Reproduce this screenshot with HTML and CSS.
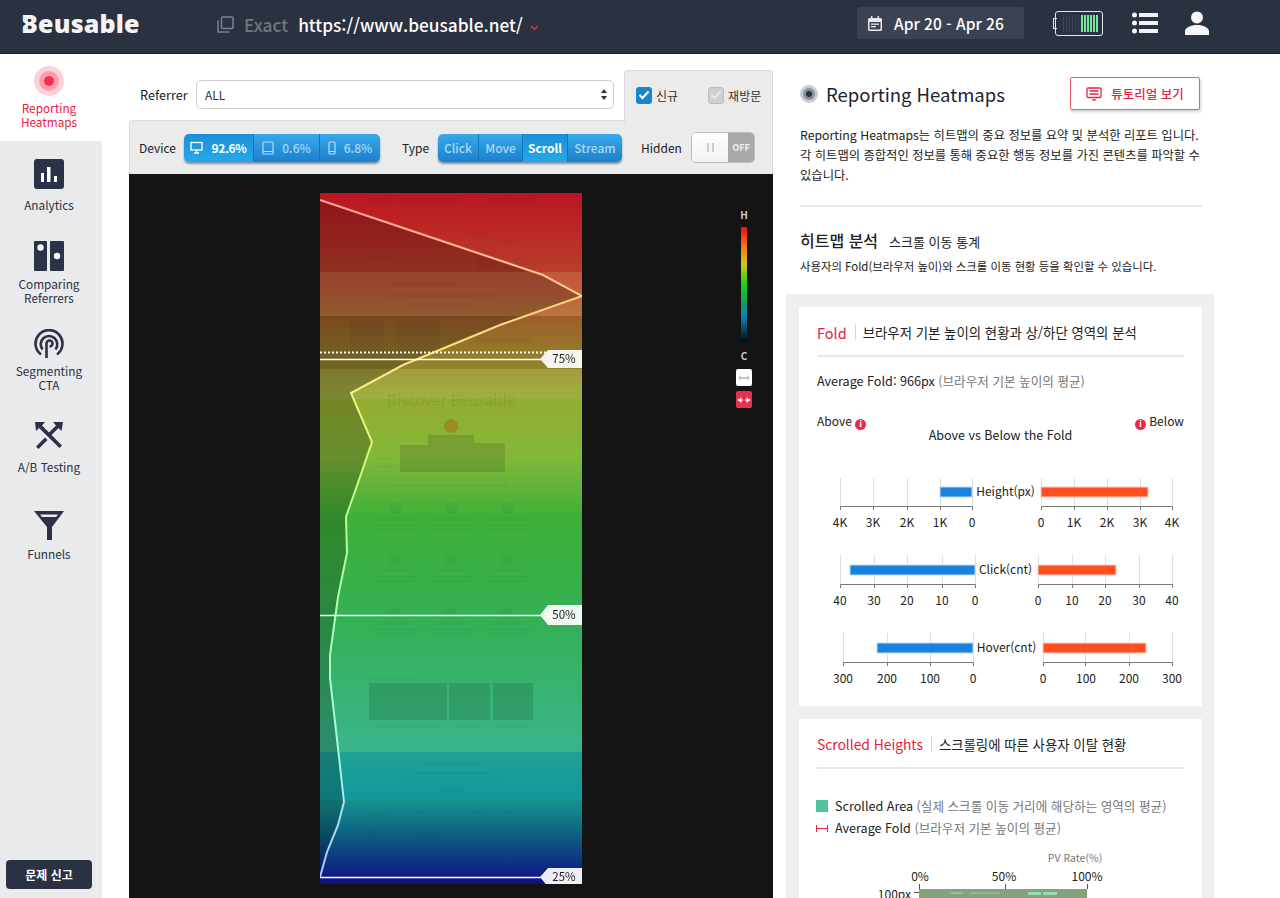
FILE: index.html
```html
<!DOCTYPE html>
<html lang="ko">
<head>
  <meta charset="UTF-8">
  <title>Beusable - Reporting Heatmaps</title>
  <link rel="stylesheet" href="styles.css">
</head>
<body>

  <header class="topbar">
    <div class="logo">Beusable</div>
    <div class="url-box">
      <svg class="copy-icon" width="17" height="17" viewBox="0 0 17 17" fill="none" stroke="#7d828d" stroke-width="1.5">
        <rect x="4.5" y="1" width="11.5" height="11.5" rx="1"/>
        <path d="M1 4.5V16H12.5"/>
      </svg>
      <span class="exact">Exact</span>
      <span class="url">https://www.beusable.net/</span>
      <svg class="chevron" width="9" height="6" viewBox="0 0 9 6" fill="none" stroke="#d8334a" stroke-width="1.5"><path d="M1 1l3.5 3.5L8 1"/></svg>
    </div>
    <div class="date-box">
      <svg width="14" height="15" viewBox="0 0 14 15" fill="#e8e9ec">
        <path d="M3 0h1.5v2h5V0H11v2h1.5A1.5 1.5 0 0 1 14 3.500V13.500A1.500 1.500 0 0 1 12.500 15H1.500A1.500 1.500 0 0 1 0 13.500V3.500A1.500 1.500 0 0 1 1.500 2H3zM1.500 6v7.500h11V6z"/>
        <rect x="3" y="7.500" width="8" height="1.300"/>
        <rect x="3" y="10" width="5" height="1.300"/>
      </svg>
      <span>Apr 20 - Apr 26</span>
    </div>
    <div class="battery">
      <div class="battery-off"></div>
      <div class="battery-on"></div>
    </div>
    <svg class="list-icon" width="26" height="22" viewBox="0 0 26 22" fill="#f2f3f5">
      <circle cx="2.500" cy="3" r="2.500"/><rect x="7" y="1" width="19" height="4"/>
      <circle cx="2.500" cy="11" r="2.500"/><rect x="7" y="9" width="19" height="4"/>
      <circle cx="2.500" cy="19" r="2.500"/><rect x="7" y="17" width="19" height="4"/>
    </svg>
    <svg class="user-icon" width="24" height="24" viewBox="0 0 24 24" fill="#f7f7f8">
      <circle cx="12" cy="6.500" r="6"/>
      <path d="M0 24v-3.500c0-4 6-6.500 12-6.500s12 2.500 12 6.500V24z"/>
    </svg>
  </header>

  <div class="layout">

    <nav class="sidebar">
      <a class="nav-item active">
        <svg width="30" height="30" viewBox="0 0 30 30">
          <circle cx="15" cy="15" r="15" fill="#fcd0d6"/>
          <circle cx="15" cy="15" r="10" fill="#fb9eab"/>
          <circle cx="15" cy="15" r="5" fill="#f5304f"/>
        </svg>
        <span>Reporting<br>Heatmaps</span>
      </a>
      <div class="nav-rest">
        <a class="nav-item analytics">
          <svg width="30" height="30" viewBox="0 0 30 30">
            <rect width="30" height="30" rx="3" fill="#2a3247"/>
            <rect x="7" y="14" width="3" height="9" fill="#fff"/>
            <rect x="13" y="8" width="3.500" height="15" fill="#fff"/>
            <rect x="20" y="17" width="3" height="6" fill="#fff"/>
          </svg>
          <span>Analytics</span>
        </a>
        <a class="nav-item comparing">
          <svg width="30" height="30" viewBox="0 0 30 30" fill="#2a3247">
            <rect width="13" height="30" rx="1"/>
            <rect x="16" width="14" height="30" rx="1"/>
            <circle cx="6.500" cy="6.500" r="3.200" fill="#fff"/>
            <circle cx="23" cy="15" r="3.200" fill="#fff"/>
          </svg>
          <span>Comparing<br>Referrers</span>
        </a>
        <a class="nav-item segmenting">
          <svg width="30" height="30" viewBox="0 0 30 30" fill="none" stroke="#2a3247" stroke-width="2.600">
            <path d="M7 25.500A13.500 13.500 0 1 1 23 25.500"/>
            <path d="M8.500 20.500A8.300 8.300 0 1 1 21.500 20.500"/>
            <path d="M12.500 29V14.500a3 3 0 1 1 3 3"/>
          </svg>
          <span>Segmenting<br>CTA</span>
        </a>
        <a class="nav-item testing">
          <svg width="30" height="30" viewBox="0 0 30 30" fill="#2a3247">
            <path d="M1 1h10L8 4.500l20 20-2.500 2.500L5 7 2 10z"/>
            <path d="M29 1H19l3 3.500-8.500 8.500 2.500 2.500L24.500 7l3 3z"/>
            <path d="M11 16.500L2 25.500 4.500 28l9-9z"/>
          </svg>
          <span>A/B Testing</span>
        </a>
        <a class="nav-item funnels">
          <svg width="30" height="30" viewBox="0 0 30 30">
            <path d="M0 0H30L18 16V29H13V16z" fill="#2a3247"/>
            <path d="M6 3.500H24L22 6H8z" fill="#e9eaec"/>
          </svg>
          <span>Funnels</span>
        </a>
        <button class="report-btn">문제 신고</button>
      </div>
    </nav>

    <main class="center">
      <div class="filter-row">
        <label class="filter-label">Referrer</label>
        <div class="select-box">
          <span>ALL</span>
          <svg width="6" height="11" viewBox="0 0 6 11" fill="#333"><path d="M3 0l3 4H0zM3 11L0 7h6z"/></svg>
        </div>
        <div class="visit-tab">
          <span class="check on"><svg width="12" height="10" viewBox="0 0 12 10" fill="none" stroke="#fff" stroke-width="2"><path d="M1.500 5l3 3L10.500 1.500"/></svg></span>
          <span class="visit-label">신규</span>
          <span class="check off"><svg width="12" height="10" viewBox="0 0 12 10" fill="none" stroke="#e8e8e8" stroke-width="2"><path d="M1.500 5l3 3L10.500 1.500"/></svg></span>
          <span class="visit-label">재방문</span>
        </div>
      </div>

      <div class="toolbar">
        <span class="tool-label device-label">Device</span>
        <div class="btn-group">
          <button class="seg seg-wide active">
            <svg width="13" height="13" viewBox="0 0 13 13" fill="none" stroke="#fff" stroke-width="1.300"><rect x="1" y="1.500" width="11" height="7.500"/><path d="M6.500 9v2.500M4 12h5"/></svg>
            92.6%
          </button>
          <button class="seg seg-tablet">
            <svg width="12" height="14" viewBox="0 0 12 14" fill="none" stroke="#b5def5" stroke-width="1.200"><rect x="1" y="1" width="10" height="12" rx="1"/><path d="M1 10.500h10"/></svg>
            0.6%
          </button>
          <button class="seg seg-phone">
            <svg width="8" height="14" viewBox="0 0 8 14" fill="none" stroke="#b5def5" stroke-width="1.200"><rect x="1" y="1" width="6" height="12" rx="1"/><path d="M1 10.500h6"/></svg>
            6.8%
          </button>
        </div>
        <span class="tool-label type-label">Type</span>
        <div class="btn-group">
          <button class="seg type-click">Click</button>
          <button class="seg type-move">Move</button>
          <button class="seg type-scroll active">Scroll</button>
          <button class="seg type-stream">Stream</button>
        </div>
        <span class="tool-label hidden-label">Hidden</span>
        <div class="toggle">
          <div class="toggle-knob"><i></i><i></i></div>
          <div class="toggle-off">OFF</div>
        </div>
      </div>

      <div class="heat-panel">
        <svg class="heat-canvas" width="262" height="691" viewBox="320 193 262 691">
          <defs>
            <linearGradient id="heat" x1="0" y1="0" x2="0" y2="1">
              <stop offset="0" stop-color="#bb1521"/>
              <stop offset="0.13" stop-color="#b9442b"/>
              <stop offset="0.2" stop-color="#a8722e"/>
              <stop offset="0.3" stop-color="#94ac2f"/>
              <stop offset="0.38" stop-color="#84b83a"/>
              <stop offset="0.47" stop-color="#3eb038"/>
              <stop offset="0.62" stop-color="#34b055"/>
              <stop offset="0.8" stop-color="#3ab58a"/>
              <stop offset="0.885" stop-color="#169f9f"/>
              <stop offset="0.93" stop-color="#0e6a8f"/>
              <stop offset="1" stop-color="#120f93"/>
            </linearGradient>
            <linearGradient id="curve" x1="0" y1="0" x2="0" y2="1">
              <stop offset="0" stop-color="#ff9c9c"/>
              <stop offset="0.15" stop-color="#ffd088"/>
              <stop offset="0.3" stop-color="#f4f57a"/>
              <stop offset="0.5" stop-color="#b4ff9a"/>
              <stop offset="0.8" stop-color="#a4ffd8"/>
              <stop offset="1" stop-color="#a8c8ff"/>
            </linearGradient>
            <g id="feature">
              <rect x="-6" y="-6" width="12" height="12" rx="2"/>
              <rect x="-15" y="9" width="30" height="2.500"/>
              <rect x="-24" y="16" width="48" height="2"/>
              <rect x="-20" y="20" width="40" height="2"/>
            </g>
          </defs>
          <rect x="320" y="193" width="262" height="691" fill="url(#heat)"/>

          <!-- page shot showing through the heat layer -->
          <rect x="320" y="272" width="262" height="44" fill="#ffe9a0" opacity="0.14"/>
          <rect x="320" y="316" width="262" height="53" fill="#000" opacity="0.08"/>
          <rect x="320" y="369" width="262" height="30" fill="#fff" opacity="0.08"/>
          <rect x="320" y="752" width="262" height="48" fill="#0a8fa0" opacity="0.5"/>
          <rect x="320" y="800" width="262" height="84" fill="#000" opacity="0.1"/>
          <g fill="#000" opacity="0.035">
            <rect x="369" y="198" width="20" height="3"/>
            <rect x="398" y="198" width="60" height="3"/>
            <rect x="488" y="198" width="21" height="5"/>
            <rect x="512" y="198" width="21" height="5"/>
            <rect x="369" y="252" width="22" height="6"/>
            <path d="M466 233l11-4 11 4-11 5zM500 242l9-3 9 3-9 4z"/>
            <path d="M475 270l5-20h14l5 20zM500 270l20-15 10 8-15 7z"/>
            <rect x="390" y="282" width="70" height="4"/>
            <rect x="388" y="293" width="110" height="5"/>
            <rect x="410" y="303" width="60" height="4"/>
            <rect x="476" y="338" width="55" height="6"/>
            <rect x="350" y="320" width="35" height="35"/>
            <rect x="395" y="320" width="45" height="35"/>
            <rect x="378" y="457" width="16" height="3"/>
            <rect x="378" y="465" width="16" height="3"/>
            <rect x="393" y="484" width="115" height="3"/>
            <use href="#feature" x="395" y="508"/>
            <use href="#feature" x="451" y="508"/>
            <use href="#feature" x="507" y="508"/>
            <use href="#feature" x="395" y="560"/>
            <use href="#feature" x="451" y="560"/>
            <use href="#feature" x="507" y="560"/>
            <use href="#feature" x="395" y="613"/>
            <use href="#feature" x="451" y="613"/>
            <use href="#feature" x="507" y="613"/>
            <rect x="369" y="677" width="47" height="3"/>
            <rect x="373" y="725" width="66" height="3"/>
            <rect x="453" y="725" width="30" height="3"/>
            <rect x="497" y="725" width="30" height="3"/>
            <rect x="423" y="761" width="56" height="5"/>
            <rect x="410" y="772" width="82" height="2"/>
            <rect x="402" y="777" width="98" height="2"/>
            <rect x="440" y="786" width="23" height="6"/>
            <rect x="369" y="812" width="16" height="3"/>
            <rect x="415" y="811" width="10" height="2"/>
            <rect x="415" y="818" width="22" height="2"/>
            <rect x="415" y="824" width="22" height="2"/>
            <rect x="415" y="833" width="22" height="2"/>
            <rect x="445" y="818" width="16" height="2"/>
            <rect x="472" y="811" width="14" height="2"/>
            <rect x="472" y="818" width="18" height="2"/>
            <rect x="503" y="811" width="10" height="2"/>
            <circle cx="371" cy="832" r="2.500"/>
          </g>
          <g fill="#000" opacity="0.12">
            <rect x="400" y="445" width="28" height="27"/>
            <rect x="428" y="435" width="46" height="37"/>
            <rect x="474" y="443" width="31" height="29"/>
            <rect x="369" y="683" width="78" height="37"/>
            <rect x="449" y="683" width="41" height="37"/>
            <rect x="493" y="683" width="40" height="37"/>
          </g>
          <circle cx="451" cy="426" r="7" fill="#a07c1c" opacity="0.7"/>
          <text x="451" y="406" text-anchor="middle" class="ghost-title">Discover Beusable</text>

          <!-- scroll curve -->
          <path d="M320 200L543 275L582 296L500 325L437 351L403 365L351 393L372 442L360 477L346 517L347 553L338 597L330 655L330 678L338 748L344 802L338 825L327 852L320 877V884H320V193z" fill="#000" opacity="0.22"/>
          <path d="M320 193V884" stroke="url(#curve)" stroke-width="1.500" fill="none"/>
          <path d="M320 200L543 275L582 296L500 325L437 351L403 365L351 393L372 442L360 477L346 517L347 553L338 597L330 655L330 678L338 748L344 802L338 825L327 852L320 877" stroke="url(#curve)" stroke-width="2" fill="none"/>

          <!-- fold lines -->
          <path d="M320 352.500H560" stroke="#fff" stroke-width="2" stroke-dasharray="2 2" fill="none"/>
          <path d="M320 359.500H545M320 615.500H545M320 877.500H545" stroke="#fff" stroke-width="1.500" fill="none"/>
          <path d="M582 350H548L540 359L548 368H582z" fill="#f5f5ee"/>
          <path d="M582 605H548L540 615L548 625H582z" fill="#f1faf2"/>
          <path d="M582 868H548L540 877L548 887H582z" fill="#eeeef8"/>
          <text x="564" y="363" class="fold-pct">75%</text>
          <text x="564" y="619" class="fold-pct">50%</text>
          <text x="564" y="881" class="fold-pct">25%</text>
        </svg>

        <div class="legend">
          <span class="legend-letter">H</span>
          <div class="legend-bar"></div>
          <span class="legend-letter low">C</span>
          <div class="legend-btn white">
            <svg width="12" height="6" viewBox="0 0 12 6" fill="#c8c8c8"><path d="M0 3l3-3v2h6V0l3 3-3 3V4H3v2z"/></svg>
          </div>
          <div class="legend-btn red">
            <svg width="12" height="6" viewBox="0 0 12 6" fill="#fff"><path d="M5 3L2 0v2H0v2h2v2zM7 3l3-3v2h2v2h-2v2z"/></svg>
          </div>
        </div>
      </div>
    </main>

    <aside class="report">
      <section class="intro">
        <div class="title-row">
          <div class="report-title">
            <svg width="18" height="18" viewBox="0 0 18 18">
              <circle cx="9" cy="9" r="9" fill="#c8cbd2"/>
              <circle cx="9" cy="9" r="6" fill="#8b8f9c"/>
              <circle cx="9" cy="9" r="3" fill="#2a3142"/>
            </svg>
            <h2>Reporting Heatmaps</h2>
          </div>
          <button class="tutorial-btn">
            <svg width="16" height="14" viewBox="0 0 16 14" fill="none" stroke="#e8233f" stroke-width="1.300">
              <rect x="1" y="1" width="14" height="9.500" rx="1"/>
              <path d="M3.500 4h9M3.500 7h9M6 12.800h4"/>
            </svg>
            튜토리얼 보기
          </button>
        </div>
        <p class="intro-text">Reporting Heatmaps는 히트맵의 중요 정보를 요약 및 분석한 리포트 입니다.<br>각 히트맵의 종합적인 정보를 통해 중요한 행동 정보를 가진 콘텐츠를 파악할 수<br>있습니다.</p>
        <div class="intro-head"><strong>히트맵 분석</strong><span>스크롤 이동 통계</span></div>
        <p class="intro-sub">사용자의 Fold(브라우저 높이)와 스크롤 이동 현황 등을 확인할 수 있습니다.</p>
      </section>

      <section class="cards">
        <div class="card fold-card">
          <div class="card-title"><em>Fold</em><span>브라우저 기본 높이의 현황과 상/하단 영역의 분석</span></div>
          <p class="avg-fold">Average Fold: 966px <small>(브라우저 기본 높이의 평균)</small></p>
          <div class="above-below">
            <span>Above <i class="info">i</i></span>
            <span><i class="info">i</i> Below</span>
          </div>
          <div class="chart-title">Above vs Below the Fold</div>
          <svg class="fold-chart" width="403" height="230" viewBox="799 470 403 230">
            <g class="grid">
              <path d="M840.500 478V506M873.500 478V506M907.500 478V506M940.500 478V506M972.500 478V506"/>
              <path d="M1041.500 478V506M1074.500 478V506M1107.500 478V506M1140.500 478V506M1172.500 478V506"/>
              <path d="M840.500 555V584M874.500 555V584M907.500 555V584M942.500 555V584M975.500 555V584"/>
              <path d="M1038.500 555V584M1072.500 555V584M1105.500 555V584M1139.500 555V584M1172.500 555V584"/>
              <path d="M843.500 633V662M887.500 633V662M930.500 633V662M973.500 633V662"/>
              <path d="M1043.500 633V662M1085.500 633V662M1129.500 633V662M1172.500 633V662"/>
            </g>
            <g class="axis">
              <path d="M840.500 510V506.500H972.500V510M873.500 506.500V510M907.500 506.500V510M940.500 506.500V510"/>
              <path d="M1041.500 510V506.500H1172.500V510M1074.500 506.500V510M1107.500 506.500V510M1140.500 506.500V510"/>
              <path d="M840.500 588V584.500H975.500V588M874.500 584.500V588M907.500 584.500V588M942.500 584.500V588"/>
              <path d="M1038.500 588V584.500H1172.500V588M1072.500 584.500V588M1105.500 584.500V588M1139.500 584.500V588"/>
              <path d="M843.500 666V662.500H973.500V666M887.500 662.500V666M930.500 662.500V666"/>
              <path d="M1043.500 666V662.500H1172.500V666M1085.500 662.500V666M1129.500 662.500V666"/>
            </g>
            <rect class="bar-left" x="940" y="487" width="32" height="10"/>
            <rect class="bar-right" x="1041" y="487" width="107" height="10"/>
            <rect class="bar-left" x="850" y="565" width="125" height="10"/>
            <rect class="bar-right" x="1038" y="565" width="78" height="10"/>
            <rect class="bar-left" x="877" y="643" width="96" height="10"/>
            <rect class="bar-right" x="1043" y="643" width="103" height="10"/>
            <g class="row-label">
              <text x="1005.500" y="496">Height(px)</text>
              <text x="1005.500" y="574">Click(cnt)</text>
              <text x="1006.500" y="652">Hover(cnt)</text>
            </g>
            <g class="tick-label">
              <text x="840" y="527">4K</text><text x="873" y="527">3K</text><text x="907" y="527">2K</text><text x="940" y="527">1K</text><text x="972" y="527">0</text>
              <text x="1041" y="527">0</text><text x="1074" y="527">1K</text><text x="1107" y="527">2K</text><text x="1140" y="527">3K</text><text x="1172" y="527">4K</text>
              <text x="840" y="605">40</text><text x="874" y="605">30</text><text x="907" y="605">20</text><text x="942" y="605">10</text><text x="975" y="605">0</text>
              <text x="1038" y="605">0</text><text x="1072" y="605">10</text><text x="1105" y="605">20</text><text x="1139" y="605">30</text><text x="1172" y="605">40</text>
              <text x="843" y="683">300</text><text x="887" y="683">200</text><text x="930" y="683">100</text><text x="973" y="683">0</text>
              <text x="1043" y="683">0</text><text x="1086" y="683">100</text><text x="1129" y="683">200</text><text x="1172" y="683">300</text>
            </g>
          </svg>
        </div>

        <div class="card scroll-card">
          <div class="card-title"><em>Scrolled Heights</em><span>스크롤링에 따른 사용자 이탈 현황</span></div>
          <ul class="scroll-legend">
            <li><i class="swatch"></i>Scrolled Area <small>(실제 스크롤 이동 거리에 해당하는 영역의 평균)</small></li>
            <li><svg class="fold-mark" width="12" height="7" viewBox="0 0 12 7" fill="none" stroke="#e8233f"><path d="M.5 0V7M11.500 0V7M0 3.500H12"/></svg>Average Fold <small>(브라우저 기본 높이의 평균)</small></li>
          </ul>
          <svg class="pv-chart" width="403" height="60" viewBox="799 850 403 60">
            <text x="1075" y="862" text-anchor="middle" class="pv-title">PV Rate(%)</text>
            <text x="920" y="881" text-anchor="middle" class="pv-tick">0%</text>
            <text x="1004" y="881" text-anchor="middle" class="pv-tick">50%</text>
            <text x="1087" y="881" text-anchor="middle" class="pv-tick">100%</text>
            <rect x="919" y="889" width="168" height="20" fill="#84a27b"/>
            <rect x="951" y="892" width="12" height="2" fill="#9cc1a0"/>
            <rect x="970" y="892" width="30" height="2" fill="#94b494"/>
            <rect x="1028" y="892" width="13" height="3" fill="#9bdcb8"/>
            <rect x="1043" y="892" width="14" height="3" fill="#9bdcb8"/>
            <path d="M919.500 884V889M1005.500 884V889M1087.500 884V889M914 892.500H919" stroke="#555" fill="none"/>
            <text x="911" y="899" text-anchor="end" class="pv-tick">100px</text>
          </svg>
        </div>
      </section>
    </aside>

  </div>

</body>
</html>
```

FILE: styles.css
```css
* {
  box-sizing: border-box;
}

html,
body {
  margin: 0;
  height: 898px;
  overflow: hidden;
}

body {
  font-family: "Noto Sans CJK KR", "Noto Sans", sans-serif;
  background: #fff;
  color: #222;
  font-size: 12px;
}

button {
  font-family: inherit;
  cursor: pointer;
}

/* header */
.topbar {
  height: 54px;
  padding-bottom: 7px;
  background: #2a3141;
  border-bottom: 1px solid #171c28;
  display: flex;
  align-items: center;
  color: #fff;
}

.logo {
  width: 196px;
  padding-left: 21px;
  font-family: "Open Sans", sans-serif;
  font-weight: 800;
  font-size: 25px;
  letter-spacing: 0.2px;
  color: #f4f4f4;
  position: relative;
}

/* notch in the B of the logo */
.logo::before {
  content: "";
  position: absolute;
  left: 21px;
  top: 50%;
  margin-top: -3px;
  width: 5px;
  height: 8px;
  background: #2a3141;
  clip-path: polygon(0 0, 100% 50%, 0 100%);
}

.url-box {
  display: flex;
  align-items: center;
  width: 661px;
  padding: 3px 0 0 21px;
  font-size: 17.300px;
}

.exact {
  margin-left: 10px;
  color: #71767f;
  font-weight: 500;
}

.url {
  margin-left: 10px;
  font-weight: 500;
}

.chevron {
  margin: 6px 0 0 7px;
}

.date-box {
  width: 167px;
  height: 32px;
  padding-left: 11px;
  background: #3b4252;
  border-radius: 3px;
  display: flex;
  align-items: center;
  gap: 12px;
  font-size: 15.500px;
  font-weight: 500;
}

.battery {
  width: 48px;
  height: 25px;
  margin-left: 31px;
  padding: 3px 3px 3px 7px;
  border: 1.500px solid #e6e8ea;
  border-radius: 3px;
  display: flex;
  gap: 2px;
  position: relative;
}

.battery::before {
  content: "";
  position: absolute;
  left: -3px;
  top: 6px;
  bottom: 6px;
  width: 3px;
  border: 1.500px solid #e6e8ea;
  border-right: 0;
}

.battery-off {
  width: 16px;
  background: repeating-linear-gradient(90deg, #3d4556 0 1.500px, #2a3141 1.500px 3px);
}

.battery-on {
  flex: 1;
  background: repeating-linear-gradient(90deg, #78e59c 0 1.500px, #2a3141 1.500px 3px);
}

.list-icon {
  margin-left: 29px;
}

.user-icon {
  margin-left: 27px;
}

/* layout */
.layout {
  display: flex;
  height: 844px;
}

/* sidebar */
.sidebar {
  width: 102px;
  display: flex;
  flex-direction: column;
  flex-shrink: 0;
}

.nav-item {
  display: flex;
  flex-direction: column;
  align-items: center;
  text-align: center;
  padding-right: 4px;
  line-height: 14px;
  color: #2a3142;
  font-size: 11.800px;
}

.nav-item svg {
  margin-bottom: 9px;
}

.nav-item.active {
  height: 87px;
  padding-top: 12px;
  color: #e8193f;
}

.nav-item.active svg {
  margin-bottom: 5px;
}

.nav-rest {
  flex: 1;
  background: #e9eaec;
  display: flex;
  flex-direction: column;
  position: relative;
  padding-top: 18px;
}

.analytics {
  height: 82px;
}

.comparing {
  height: 88px;
}

.comparing svg {
  margin-bottom: 6px;
}

.segmenting {
  height: 92px;
}

.segmenting svg {
  margin-bottom: 5px;
}

.testing {
  height: 90px;
}

.funnels svg {
  margin-bottom: 6px;
}

.report-btn {
  margin: auto 0 9px 6px;
  width: 86px;
  height: 29px;
  background: #2a3142;
  border: 0;
  border-radius: 4px;
  color: #fff;
  font-size: 12px;
  font-weight: 700;
}

/* center column */
.center {
  width: 644px;
  margin-left: 27px;
  flex-shrink: 0;
  display: flex;
  flex-direction: column;
}

.filter-row {
  height: 66px;
  padding-top: 26px;
  display: flex;
  align-items: flex-start;
}

.filter-label {
  width: 67px;
  padding: 5px 0 0 11px;
  font-size: 12.700px;
  color: #222;
}

.select-box {
  width: 418px;
  height: 29px;
  background: #fff;
  border: 1px solid #ccc;
  border-radius: 5px;
  padding: 0 6px 0 8px;
  display: flex;
  align-items: center;
  justify-content: space-between;
  color: #333;
}

.visit-tab {
  width: 149px;
  height: 52px;
  margin: -10px 0 0 10px;
  background: #ebebeb;
  border: 1px solid #d9d9d9;
  border-bottom: 0;
  border-radius: 4px 4px 0 0;
  position: relative;
  z-index: 1;
  display: flex;
  align-items: center;
  padding: 0 0 3px 11px;
  font-size: 12px;
}

.check {
  width: 16px;
  height: 17px;
  border-radius: 3px;
  display: flex;
  align-items: center;
  justify-content: center;
}

.check.on {
  background: #1a86cf;
}

.check.off {
  background: #cfcfcf;
  border: 1px solid #bbb;
  margin-left: 30px;
}

.visit-label {
  margin-left: 4px;
  color: #333;
}

.toolbar {
  height: 54px;
  background: #ebebeb;
  border: 1px solid #dadada;
  border-bottom: 0;
  border-radius: 4px 0 0 0;
  display: flex;
  align-items: center;
  padding: 0 17px 0 9px;
}

.tool-label {
  font-size: 12px;
  color: #222;
}

.device-label {
  width: 45px;
}

.type-label {
  margin-left: 22px;
  width: 36px;
}

.hidden-label {
  margin-left: 19px;
  width: 50px;
}

.btn-group {
  display: flex;
  height: 28px;
  border-radius: 5px;
  box-shadow: 0 2px 2px rgba(0, 40, 80, 0.45);
  overflow: hidden;
}

.seg {
  height: 28px;
  padding: 0;
  border: 0;
  border-right: 1px solid #1474b4;
  background: linear-gradient(#37a8e8, #1c80cd);
  color: #a9d8f3;
  font-size: 12px;
  font-weight: 500;
  display: flex;
  align-items: center;
  justify-content: center;
  gap: 8px;
}

.seg:last-child {
  border-right: 0;
}

.seg.active {
  background: linear-gradient(#1b8fd8, #24a8ec);
  color: #fff;
  font-weight: 700;
}

.seg-wide {
  width: 70px;
  letter-spacing: -0.3px;
}

.seg-tablet {
  width: 66px;
}

.seg-phone {
  width: 60px;
}

.type-click {
  width: 41px;
}

.type-move {
  width: 44px;
}

.type-scroll {
  width: 45px;
}

.type-stream {
  width: 54px;
}

.toggle {
  width: 64px;
  height: 31px;
  border-radius: 5px;
  border: 1px solid #bbb;
  display: flex;
  overflow: hidden;
}

.toggle-knob {
  width: 36px;
  background: linear-gradient(#fff, #f1f1f1);
  display: flex;
  align-items: center;
  justify-content: center;
  gap: 3px;
}

.toggle-knob i {
  width: 2px;
  height: 9px;
  background: #ccc;
}

.toggle-off {
  flex: 1;
  background: #a9a9a9;
  color: #eee;
  font-size: 9px;
  font-weight: 700;
  display: flex;
  align-items: center;
  justify-content: center;
}

/* heatmap */
.heat-panel {
  flex: 1;
  background: #141414;
  padding: 19px 0 0 191px;
  position: relative;
}

.heat-canvas {
  display: block;
}

.ghost-title {
  font-size: 15px;
  fill: #000;
  opacity: 0.07;
}

.fold-pct {
  font-size: 11.500px;
  fill: #222;
  text-anchor: middle;
}

.legend {
  position: absolute;
  left: 607px;
  top: 35px;
  width: 16px;
  display: flex;
  flex-direction: column;
  align-items: center;
  color: #ccc;
}

.legend-letter {
  font-size: 10px;
  font-weight: 700;
  line-height: 12px;
  margin-bottom: 6px;
}

.legend-letter.low {
  margin: 7px 0 7px;
}

.legend-bar {
  width: 6px;
  height: 116px;
  background: linear-gradient(#f01010, #ef7a14 17%, #d9c71a 32%, #18d018 50%, #14a060 65%, #127ab0 78%, #0b3d58 90%, #050505);
}

.legend-btn {
  width: 16px;
  height: 17px;
  border-radius: 2px;
  display: flex;
  align-items: center;
  justify-content: center;
  margin-bottom: 5px;
}

.legend-btn.white {
  background: #fff;
}

.legend-btn.red {
  background: #e6324f;
}

/* right column */
.report {
  width: 428px;
  margin-left: 13px;
  display: flex;
  flex-direction: column;
}

.intro {
  height: 240px;
  padding: 23px 12px 0 14px;
}

.title-row {
  display: flex;
  justify-content: space-between;
  padding-right: 2px;
}

.report-title {
  display: flex;
  align-items: center;
  gap: 8px;
  height: 34px;
}

.report-title h2 {
  margin: 0;
  font-size: 18.500px;
  font-weight: 400;
  color: #1e2433;
}

.tutorial-btn {
  width: 130px;
  height: 33px;
  background: #fff;
  border: 1.500px solid #ee5a72;
  border-radius: 2px;
  box-shadow: 1px 2px 3px rgba(0, 0, 0, 0.18);
  color: #e8233f;
  font-size: 12.500px;
  font-weight: 500;
  display: flex;
  align-items: center;
  justify-content: center;
  gap: 9px;
}

.intro-text {
  margin: 14px 0 0;
  padding-bottom: 20px;
  border-bottom: 2px solid #e8e8e8;
  font-size: 12.300px;
  line-height: 20px;
  color: #222;
  white-space: nowrap;
}

.intro-head {
  margin-top: 22px;
  display: flex;
  align-items: baseline;
  gap: 11px;
  line-height: 22px;
}

.intro-head strong {
  font-size: 16px;
  font-weight: 500;
}

.intro-head span {
  font-size: 13px;
}

.intro-sub {
  margin: 4px 0 0;
  font-size: 11.400px;
  line-height: 18px;
}

.cards {
  flex: 1;
  background: #efefef;
  padding: 13px 12px 0 13px;
  overflow: hidden;
}

.card {
  background: #fff;
  padding: 0 18px;
}

.fold-card {
  height: 399px;
  margin-bottom: 13px;
  position: relative;
}

.scroll-card {
  height: 300px;
}

.card-title {
  display: flex;
  align-items: center;
  height: 50px;
  padding-top: 2px;
  border-bottom: 2px solid #e8e8e8;
  font-size: 13.400px;
}

.card-title em {
  font-style: normal;
  font-size: 14.500px;
  color: #e8193f;
}

.scroll-card .card-title em {
  font-size: 13.800px;
}

.card-title span {
  margin-left: 8px;
  padding-left: 8px;
  position: relative;
  color: #222;
}

.card-title span::before {
  content: "";
  position: absolute;
  left: 0;
  top: 2px;
  bottom: 2px;
  width: 1px;
  background: #d5d5d5;
}

.avg-fold {
  margin: 15px 0 0;
  font-size: 12.600px;
  line-height: 18px;
}

small {
  font-size: 12.600px;
  color: #777;
}

.above-below {
  margin-top: 23px;
  display: flex;
  justify-content: space-between;
  line-height: 16px;
}

.info {
  display: inline-flex;
  width: 11px;
  height: 11px;
  border-radius: 50%;
  background: #f0284a;
  color: #fff;
  font-size: 8px;
  font-style: normal;
  font-weight: 700;
  align-items: center;
  justify-content: center;
  vertical-align: -1px;
}

.chart-title {
  text-align: center;
  font-size: 12.500px;
  line-height: 16px;
  margin-top: -3px;
}

.fold-chart {
  position: absolute;
  left: 0;
  top: 163px;
}

.grid path {
  stroke: #ddd;
  fill: none;
}

.axis path {
  stroke: #777;
  fill: none;
}

.bar-left {
  fill: #1a82de;
  stroke: #bcdcf6;
}

.bar-right {
  fill: #ff4e20;
  stroke: #ffd0c0;
}

.row-label text,
.tick-label text {
  font-size: 12px;
  fill: #222;
  text-anchor: middle;
}

.scroll-legend {
  list-style: none;
  margin: 26px 0 0;
  padding: 0;
  line-height: 22px;
  font-size: 12.600px;
}

.scroll-legend li {
  display: flex;
  align-items: center;
  white-space: pre;
}

.swatch {
  width: 12px;
  height: 12px;
  background: #52c29b;
  margin-right: 7px;
  margin-left: -1px;
}

.fold-mark {
  margin: 0 7px 0 -1px;
}

.pv-chart {
  display: block;
  margin: 11px 0 0 -18px;
}

.pv-title {
  font-size: 10.500px;
  fill: #777;
}

.pv-tick {
  font-size: 12px;
  fill: #222;
}
```
